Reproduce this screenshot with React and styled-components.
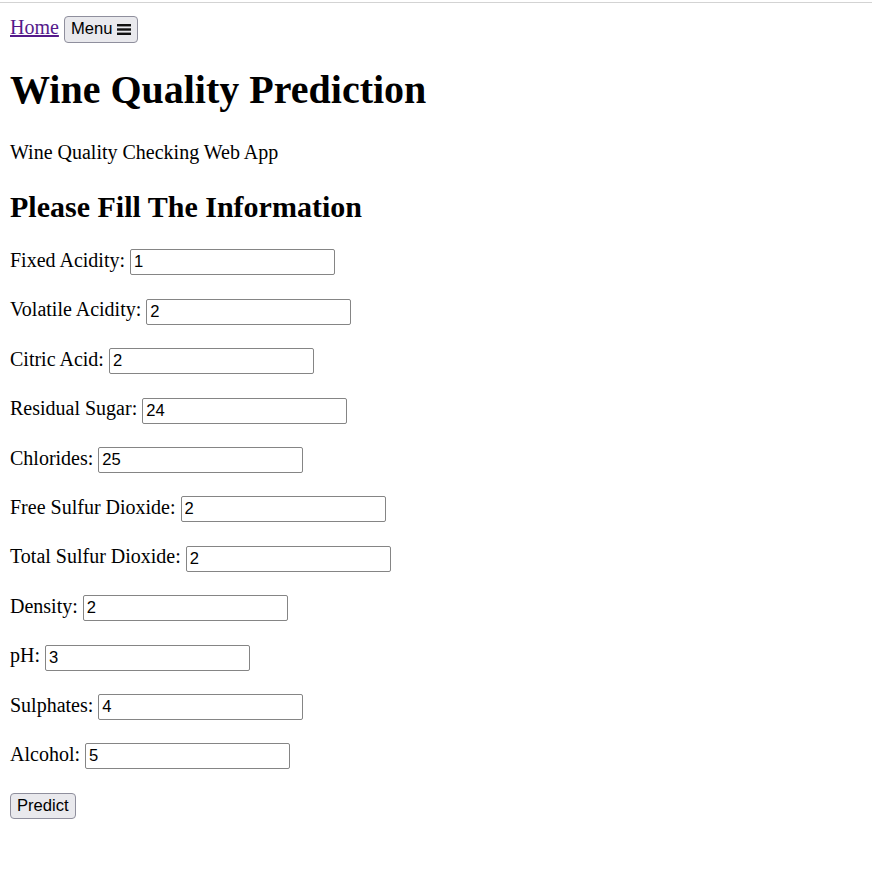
import styled, { createGlobalStyle } from "styled-components";

const fields = [
  { label: "Fixed Acidity", value: "1" },
  { label: "Volatile Acidity", value: "2" },
  { label: "Citric Acid", value: "2" },
  { label: "Residual Sugar", value: "24" },
  { label: "Chlorides", value: "25" },
  { label: "Free Sulfur Dioxide", value: "2" },
  { label: "Total Sulfur Dioxide", value: "2" },
  { label: "Density", value: "2" },
  { label: "pH", value: "3" },
  { label: "Sulphates", value: "4" },
  { label: "Alcohol", value: "5" },
];

const BarsIcon = () => (
  <svg width="14" height="13" viewBox="0 0 14 13" aria-hidden="true">
    <rect x="0" y="1" width="14" height="2.4" />
    <rect x="0" y="5.3" width="14" height="2.4" />
    <rect x="0" y="9.6" width="14" height="2.4" />
  </svg>
);

const App = () => {
  return (
    <>
      <GlobalStyle />
      <TopRule />
      <Page>
        <Nav>
          <NavLink href="#">Home</NavLink> <MenuButton type="button">Menu <BarsIcon /></MenuButton>
        </Nav>
        <Title>Wine Quality Prediction</Title>
        <Text>Wine Quality Checking Web App</Text>
        <SubTitle>Please Fill The Information</SubTitle>
        <form onSubmit={(e) => e.preventDefault()}>
          {fields.map((f) => (
            <Field key={f.label}>
              {f.label}: <TextInput type="text" defaultValue={f.value} />
            </Field>
          ))}
          <SubmitButton type="submit">Predict</SubmitButton>
        </form>
      </Page>
    </>
  );
};

export default App;

const GlobalStyle = createGlobalStyle`
  body {
    margin: 0;
    background: #fff;
    font-family: "Liberation Serif", "Times New Roman", serif;
    font-size: 20px;
    color: #000;
  }
`;

const TopRule = styled.div`
  margin-top: 2px;
  border-top: 1px solid #d3d3d3;
`;

const Page = styled.div`
  padding: 0 10px 10px;
`;

const Nav = styled.div`
  margin-top: 11px;
  line-height: 26px;
`;

const NavLink = styled.a`
  color: #551a8b;
  text-decoration: underline;
`;

const MenuButton = styled.button`
  font-family: "Liberation Sans", Arial, sans-serif;
  font-size: 16.6px;
  color: #000;
  background: #e9e9ed;
  border: 1px solid #8f8f9d;
  border-radius: 4px;
  padding: 2px 6px;
  height: 27px;
  vertical-align: middle;
  display: inline-flex;
  align-items: center;
  gap: 5px;
  svg {
    fill: #111;
  }
`;

const Title = styled.h1`
  font-size: 40px;
  font-weight: bold;
  margin: 23px 0 28px;
`;

const Text = styled.p`
  margin: 20px 0;
`;

const SubTitle = styled.h2`
  font-size: 30px;
  font-weight: bold;
  margin: 26px 0 22px;
`;

const Field = styled.p`
  margin: 20px 0;
  line-height: 29px;
`;

const TextInput = styled.input`
  font-family: "Liberation Sans", Arial, sans-serif;
  font-size: 16.6px;
  width: 205px;
  height: 26px;
  box-sizing: border-box;
  padding: 1px 3px;
  border: 1px solid #858585;
  border-radius: 2px;
  vertical-align: middle;
  color: #000;
`;

const SubmitButton = styled.button`
  font-family: "Liberation Sans", Arial, sans-serif;
  font-size: 16.6px;
  color: #000;
  background: #e9e9ed;
  border: 1px solid #8f8f9d;
  border-radius: 4px;
  padding: 1px 6px;
  height: 26px;
  margin-top: 4px;
`;
